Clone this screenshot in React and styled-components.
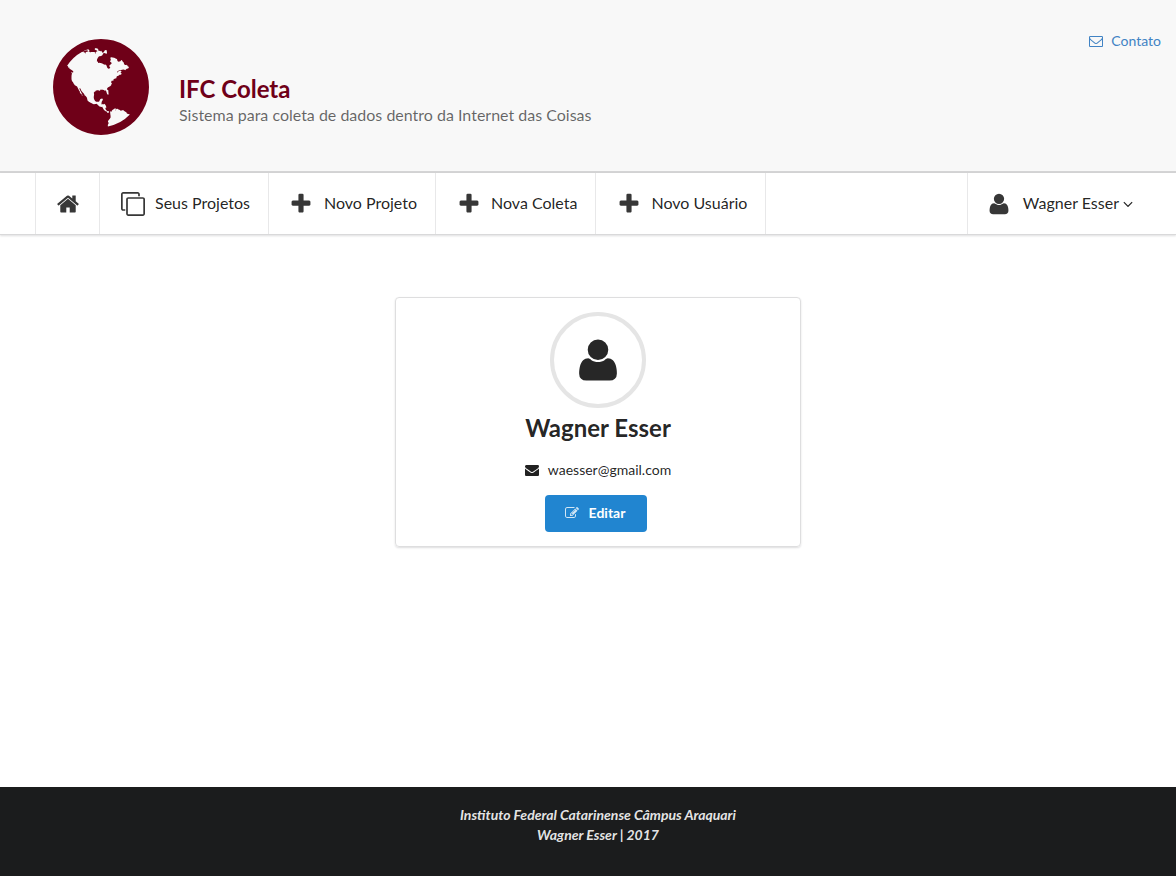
import React from 'react';
import styled, { createGlobalStyle } from 'styled-components';

const PATHS = {
  globe:
    'M896 128q209 0 385.5 103t279.5 279.5 103 385.5-103 385.5-279.5 279.5-385.5 103-385.5-103-279.5-279.5-103-385.5 103-385.5 279.5-279.5 385.5-103zm274 521q-2 1-9.5 9.5t-13.5 9.5q2 0 4.5-5t5-11 3.5-7q6-7 22-15 14-6 52-12 34-8 51 11-2-2 9.5-13t14.5-12q3-2 15-4.5t15-7.5l2-22q-12 1-17.5-7t-6.5-21q0 2-6 8 0-7-4.5-8t-11.5 1-9 1q-10-3-15-7.5t-8-16.5-4-15q-2-5-9.5-11t-9.5-10q-1-2-2.5-5.5t-3-6.5-4-5.5-5.5-2.5-7 5-7.5 10-4.5 5q-3-2-6-1.5t-4.5 1-4.5 3-5 3.5q-3 2-8.5 3t-8.5 2q15-5-1-11-10-4-16-3 9-4 7.5-12t-8.5-14h5q-1-4-8.5-8.5t-17.5-8.5-13-6q-8-5-34-9.5t-33-.5q-5 6-4.5 10.5t4 14 3.5 12.5q1 6-5.5 13t-6.5 12q0 7 14 15.5t10 21.5q-3 8-16 16t-16 12q-5 8-1.5 18.5t10.5 16.5q2 2 1.5 4t-3.5 4.5-5.5 4-6.5 3.5l-3 2q-11 5-20.5-6t-13.5-26q-7-25-16-30-23-8-29 1-5-13-41-26-25-9-58-4 6-1 0-15-7-15-19-12 3-6 4-17.5t1-13.5q3-13 12-23 1-1 7-8.5t9.5-13.5.5-6q35 4 50-11 5-5 11.5-17t10.5-17q9-6 14-5.5t14.5 5.5 14.5 5q14 1 15.5-11t-7.5-20q12 1 3-17-5-7-8-9-12-4-27 5-8 4 2 8-1-1-9.5 10.5t-16.5 17.5-16-5q-1-1-5.5-13.5t-9.5-13.5q-8 0-16 15 3-8-11-15t-24-8q19-12-8-27-7-4-20.5-5t-19.5 4q-5 7-5.5 11.5t5 8 10.5 5.5 11.5 4 8.5 3q14 10 8 14-2 1-8.5 3.5t-11.5 4.5-6 4q-3 4 0 14t-2 14q-5-5-9-17.5t-7-16.5q7 9-25 6l-10-1q-4 0-16 2t-20.5 1-13.5-8q-4-8 0-20 1-4 4-2-4-3-11-9.5t-10-8.5q-46 15-94 41 6 1 12-1 5-2 13-6.5t10-5.5q34-14 42-7l5-5q14 16 20 25-7-4-30-1-20 6-22 12 7 12 5 18-4-3-11.5-10t-14.5-11-15-5q-16 0-22 1-146 80-235 222 7 7 12 8 4 1 5 9t2.5 11 11.5-3q9 8 3 19 1-1 44 27 19 17 21 21 3 11-10 18-1-2-9-9t-9-4q-3 5 .5 18.5t10.5 12.5q-7 0-9.5 16t-2.5 35.5-1 23.5l2 1q-3 12 5.5 34.5t21.5 19.5q-13 3 20 43 6 8 8 9 3 2 12 7.5t15 10 10 10.5q4 5 10 22.5t14 23.5q-2 6 9.5 20t10.5 23q-1 0-2.5 1t-2.5 1q3 7 15.5 14t15.5 13q1 3 2 10t3 11 8 2q2-20-24-62-15-25-17-29-3-5-5.5-15.5t-4.5-14.5q2 0 6 1.5t8.5 3.5 7.5 4 2 3q-3 7 2 17.5t12 18.5 17 19 12 13q6 6 14 19.5t0 13.5q9 0 20 10t17 20q5 8 8 26t5 24q2 7 8.5 13.5t12.5 9.5l16 8 13 7q5 2 18.5 10.5t21.5 11.5q10 4 16 4t14.5-2.5 13.5-3.5q15-2 29 15t21 21q36 19 55 11-2 1 .5 7.5t8 15.5 9 14.5 5.5 8.5q5 6 18 15t18 15q6-4 7-9-3 8 7 20t18 10q14-3 14-32-31 15-49-18 0-1-2.5-5.5t-4-8.5-2.5-8.5 0-7.5 5-3q9 0 10-3.5t-2-12.5-4-13q-1-8-11-20t-12-15q-5 9-16 8t-16-9q0 1-1.5 5.5t-1.5 6.5q-13 0-15-1 1-3 2.5-17.5t3.5-22.5q1-4 5.5-12t7.5-14.5 4-12.5-4.5-9.5-17.5-2.5q-19 1-26 20-1 3-3 10.5t-5 11.5-9 7q-7 3-24 2t-24-5q-13-8-22.5-29t-9.5-37q0-10 2.5-26.5t3-25-5.5-24.5q3-2 9-9.5t10-10.5q2-1 4.5-1.5t4.5 0 4-1.5 3-6q-1-1-4-3-3-3-4-3 7 3 28.5-1.5t27.5 1.5q15 11 22-2 0-1-2.5-9.5t-.5-13.5q5 27 29 9 3 3 15.5 5t17.5 5q3 2 7 5.5t5.5 4.5 5-.5 8.5-6.5q10 14 12 24 11 40 19 44 7 3 11 2t4.5-9.5 0-14-1.5-12.5l-1-8v-18l-1-8q-15-3-18.5-12t1.5-18.5 15-18.5q1-1 8-3.5t15.5-6.5 12.5-8q21-19 15-35 7 0 11-9-1 0-5-3t-7.5-5-4.5-2q9-5 2-16 5-3 7.5-11t7.5-10q9 12 21 2 8-8 1-16 5-7 20.5-10.5t18.5-9.5q7 2 8-2t1-12 3-12q4-5 15-9t13-5l17-11q3-4 0-4 18 2 31-11 10-11-6-20 3-6-3-9.5t-15-5.5q3-1 11.5-.5t10.5-1.5q15-10-7-16-17-5-43 12zm-163 877q206-36 351-189-3-3-12.5-4.5t-12.5-3.5q-18-7-24-8 1-7-2.5-13t-8-9-12.5-8-11-7q-2-2-7-6t-7-5.5-7.5-4.5-8.5-2-10 1l-3 1q-3 1-5.5 2.5t-5.5 3-4 3 0 2.5q-21-17-36-22-5-1-11-5.5t-10.5-7-10-1.5-11.5 7q-5 5-6 15t-2 13q-7-5 0-17.5t2-18.5q-3-6-10.5-4.5t-12 4.5-11.5 8.5-9 6.5-8.5 5.5-8.5 7.5q-3 4-6 12t-5 11q-2-4-11.5-6.5t-9.5-5.5q2 10 4 35t5 38q7 31-12 48-27 25-29 40-4 22 12 26 0 7-8 20.5t-7 21.5q0 6 2 16z',
  home:
    'M1472 992v480q0 26-19 45t-45 19h-384v-384h-256v384h-384q-26 0-45-19t-19-45v-480q0-1 .5-3t.5-3l575-474 575 474q1 2 1 6zm223-69l-62 74q-8 9-21 11h-3q-13 0-21-7l-692-577-692 577q-12 8-24 7-13-2-21-11l-62-74q-8-10-7-23.5t11-21.5l719-599q32-26 76-26t76 26l244 204v-195q0-14 9-23t23-9h192q14 0 23 9t9 23v408l219 182q10 8 11 21.5t-7 23.5z',
  clone:
    'M1664 1632v-1088q0-13-9.5-22.5t-22.5-9.5h-1088q-13 0-22.5 9.5t-9.5 22.5v1088q0 13 9.5 22.5t22.5 9.5h1088q13 0 22.5-9.5t9.5-22.5zm128-1088v1088q0 66-47 113t-113 47h-1088q-66 0-113-47t-47-113v-1088q0-66 47-113t113-47h1088q66 0 113 47t47 113zm-384-384v160h-128v-160q0-13-9.5-22.5t-22.5-9.5h-1088q-13 0-22.5 9.5t-9.5 22.5v1088q0 13 9.5 22.5t22.5 9.5h160v128h-160q-66 0-113-47t-47-113v-1088q0-66 47-113t113-47h1088q66 0 113 47t47 113z',
  plus:
    'M1600 736v192q0 40-28 68t-68 28h-416v416q0 40-28 68t-68 28h-192q-40 0-68-28t-28-68v-416h-416q-40 0-68-28t-28-68v-192q0-40 28-68t68-28h416v-416q0-40 28-68t68-28h192q40 0 68 28t28 68v416h416q40 0 68 28t28 68z',
  user:
    'M1600 1405q0 120-73 189.5t-194 69.5h-874q-121 0-194-69.5t-73-189.5q0-53 3.5-103.5t14-109 26.5-108.5 43-97.5 62-81 85.5-53.5 111.5-20q9 0 42 21.5t74.5 48 108 48 133.5 21.5 133.5-21.5 108-48 74.5-48 42-21.5q61 0 111.5 20t85.5 53.5 62 81 43 97.5 26.5 108.5 14 109 3.5 103.5zm-320-893q0 159-112.5 271.5t-271.5 112.5-271.5-112.5-112.5-271.5 112.5-271.5 271.5-112.5 271.5 112.5 112.5 271.5z',
  angleDown:
    'M1395 736q0 13-10 23l-466 466q-10 10-23 10t-23-10l-466-466q-10-10-10-23t10-23l50-50q10-10 23-10t23 10l393 393 393-393q10-10 23-10t23 10l50 50q10 10 10 23z',
  mail:
    'M1792 710v794q0 66-47 113t-113 47h-1472q-66 0-113-47t-47-113v-794q44 49 101 87 362 246 497 345 57 42 92.5 65.5t94.5 48 110 24.5h2q51 0 110-24.5t94.5-48 92.5-65.5q170-123 498-345 57-39 100-87zm0-294q0 79-49 151t-122 123q-376 261-468 325-10 7-42.5 31t-54 38.5-52 32.5-57.5 27-50 9h-2q-23 0-50-9t-57.5-27-52-32.5-54-38.5-42.5-31q-91-64-262-182.5t-205-142.5q-62-42-117-115.5t-55-136.5q0-78 41.5-130t118.5-52h1472q65 0 112.5 47t47.5 113z',
  mailOutline:
    'M1664 1504v-768q-32 36-69 66-268 206-426 338-51 43-83 67t-86.5 48.5-102.5 24.5h-2q-48 0-102.5-24.5t-86.5-48.5-83-67q-158-132-426-338-37-30-69-66v768q0 13 9.5 22.5t22.5 9.5h1472q13 0 22.5-9.5t9.5-22.5zm0-1051v-24.5l-.5-13-3-12.5-5.5-9-9-7.5-14-2.5h-1472q-13 0-22.5 9.5t-9.5 22.5q0 168 147 284 193 152 401 317 6 5 35 29.5t46 37.5 44.5 31.5 50.5 27.5 43 9h2q20 0 43-9t50.5-27.5 44.5-31.5 46-37.5 35-29.5q208-165 401-317 54-43 100.5-115.5t46.5-131.5zm128-37v1088q0 66-47 113t-113 47h-1472q-66 0-113-47t-47-113v-1088q0-66 47-113t113-47h1472q66 0 113 47t47 113z',
  edit:
    'M888 1184l116-116-152-152-116 116v56h96v96h56zm440-720q-16-16-33 1l-350 350q-17 17-1 33t33-1l350-350q17-17 1-33zm80 594v190q0 119-84.5 203.5t-203.5 84.5h-832q-119 0-203.5-84.5t-84.5-203.5v-832q0-119 84.5-203.5t203.5-84.5h832q63 0 117 25 15 7 18 23 3 17-9 29l-49 49q-14 14-32 8-23-6-45-6h-832q-66 0-113 47t-47 113v832q0 66 47 113t113 47h832q66 0 113-47t47-113v-126q0-13 9-22l64-64q15-15 35-7t20 29zm-96-738l288 288-672 672h-288v-288zm444 132l-92 92-288-288 92-92q28-28 68-28t68 28l152 152q28 28 28 68t-28 68z',
};

const GlobalStyle = createGlobalStyle`
  *, *::before, *::after { box-sizing: border-box; }
  body {
    margin: 0;
    background: #fff;
    color: rgba(0, 0, 0, 0.87);
    font-family: Lato, 'Liberation Sans', sans-serif;
    font-size: 14px;
    line-height: 20px;
  }
`;

const Svg = styled.svg`
  display: block;
  flex: none;
  width: ${(p) => p.$size}px;
  height: ${(p) => p.$size}px;
  fill: currentColor;
`;

const Icon = ({ name, size }) => (
  <Svg $size={size} viewBox="0 0 1792 1792" aria-hidden="true">
    <path d={PATHS[name]} />
  </Svg>
);

const Page = styled.div`
  display: flex;
  flex-direction: column;
  min-height: 100vh;
`;

const Header = styled.header`
  display: flex;
  justify-content: space-between;
  align-items: flex-start;
  padding: 31px 15px 28px 45px;
  background: #f8f8f8;
  border-bottom: 2px solid #d4d4d5;
`;

const Brand = styled.div`
  display: flex;
  align-items: flex-end;
  gap: 22px;
  color: #6f0018;
`;

const BrandText = styled.div`
  padding-bottom: 16px;
`;

const Title = styled.h1`
  margin: 0;
  font-size: 24px;
  line-height: 28px;
  font-weight: 700;
`;

const Subtitle = styled.p`
  margin: 0;
  font-size: 16px;
  line-height: 24px;
  color: rgba(0, 0, 0, 0.6);
`;

const ContactLink = styled.a`
  display: flex;
  align-items: center;
  gap: 8px;
  color: #4183c4;
  text-decoration: none;
`;

const Nav = styled.nav`
  display: flex;
  justify-content: space-between;
  padding: 0 24px 0 35px;
  border-bottom: 1px solid #d9d9da;
  box-shadow: 0 1px 2px rgba(34, 36, 38, 0.15);
`;

const NavGroup = styled.div`
  display: flex;
  border-left: 1px solid #e8e8e9;
`;

const NavLink = styled.a`
  display: flex;
  align-items: center;
  gap: 8px;
  height: 61px;
  padding: 1px ${(p) => (p.$iconOnly ? 17 : 18)}px 0;
  border-right: 1px solid #e8e8e9;
  color: inherit;
  font-size: 16px;
  text-decoration: none;
`;

const UserMenu = styled.button`
  display: flex;
  align-items: center;
  height: 61px;
  padding: 1px 16px 0 17px;
  border: 0;
  background: none;
  color: inherit;
  font: inherit;
  font-size: 16px;
  cursor: pointer;
`;

const NavIcon = styled.span`
  display: flex;
  justify-content: center;
  width: 29px;
  color: #373737;
`;

const NavLabel = styled.span`
  padding-bottom: 3px;
`;

const UserName = styled(NavLabel)`
  margin: 0 1px 0 9px;
`;

const Main = styled.main`
  flex: 1;
  padding: 62px 16px 62px 36px;
`;

const Card = styled.section`
  display: flex;
  flex-direction: column;
  align-items: center;
  max-width: 406px;
  margin: 0 auto;
  padding: 14px;
  border: 1px solid #dededf;
  border-radius: 4px;
  box-shadow: 0 1px 2px rgba(34, 36, 38, 0.15);
`;

const Avatar = styled.div`
  display: flex;
  align-items: center;
  justify-content: center;
  width: 96px;
  height: 96px;
  border: 4px solid #e5e5e5;
  border-radius: 50%;
  color: #272727;
`;

const Name = styled.h2`
  margin: 6px 0 18px;
  font-size: 24px;
  line-height: 28px;
`;

const Email = styled.p`
  display: flex;
  align-items: center;
  gap: 9px;
  margin: 0 0 15px;
`;

const EditButton = styled.button`
  display: flex;
  align-items: center;
  gap: 10px;
  height: 37px;
  margin-right: 4px;
  padding: 0 22px 2px 20px;
  border: 0;
  border-radius: 4px;
  background: #2185d0;
  color: #fff;
  font: inherit;
  font-weight: 700;
  cursor: pointer;

  svg { opacity: 0.8; }
`;

const Footer = styled.footer`
  padding: 18px 16px 31px 36px;
  background: #1b1c1d;
  color: rgba(255, 255, 255, 0.9);
  font-style: italic;
  font-weight: 700;
  text-align: center;
`;

const FooterLine = styled.p`
  margin: 0;
`;

const LINKS = [
  { icon: 'clone', label: 'Seus Projetos' },
  { icon: 'plus', label: 'Novo Projeto' },
  { icon: 'plus', label: 'Nova Coleta' },
  { icon: 'plus', label: 'Novo Usuário' },
];

export default function App() {
  return (
    <Page>
      <GlobalStyle />
      <Header>
        <Brand>
          <Icon name="globe" size={112} />
          <BrandText>
            <Title>IFC Coleta</Title>
            <Subtitle>Sistema para coleta de dados dentro da Internet das Coisas</Subtitle>
          </BrandText>
        </Brand>
        <ContactLink href="#contato">
          <Icon name="mailOutline" size={14} />
          Contato
        </ContactLink>
      </Header>
      <Nav>
        <NavGroup>
          <NavLink href="#inicio" aria-label="Início" $iconOnly>
            <NavIcon><Icon name="home" size={24} /></NavIcon>
          </NavLink>
          {LINKS.map(({ icon, label }) => (
            <NavLink key={label} href="#">
              <NavIcon><Icon name={icon} size={24} /></NavIcon>
              <NavLabel>{label}</NavLabel>
            </NavLink>
          ))}
        </NavGroup>
        <NavGroup>
          <UserMenu type="button" aria-haspopup="menu">
            <NavIcon><Icon name="user" size={24} /></NavIcon>
            <UserName>Wagner Esser</UserName>
            <Icon name="angleDown" size={16} />
          </UserMenu>
        </NavGroup>
      </Nav>
      <Main>
        <Card>
          <Avatar><Icon name="user" size={48} /></Avatar>
          <Name>Wagner Esser</Name>
          <Email>
            <Icon name="mail" size={14} />
            waesser@gmail.com
          </Email>
          <EditButton type="button">
            <Icon name="edit" size={14} />
            Editar
          </EditButton>
        </Card>
      </Main>
      <Footer>
        <FooterLine>Instituto Federal Catarinense Câmpus Araquari</FooterLine>
        <FooterLine>Wagner Esser | 2017</FooterLine>
      </Footer>
    </Page>
  );
}
